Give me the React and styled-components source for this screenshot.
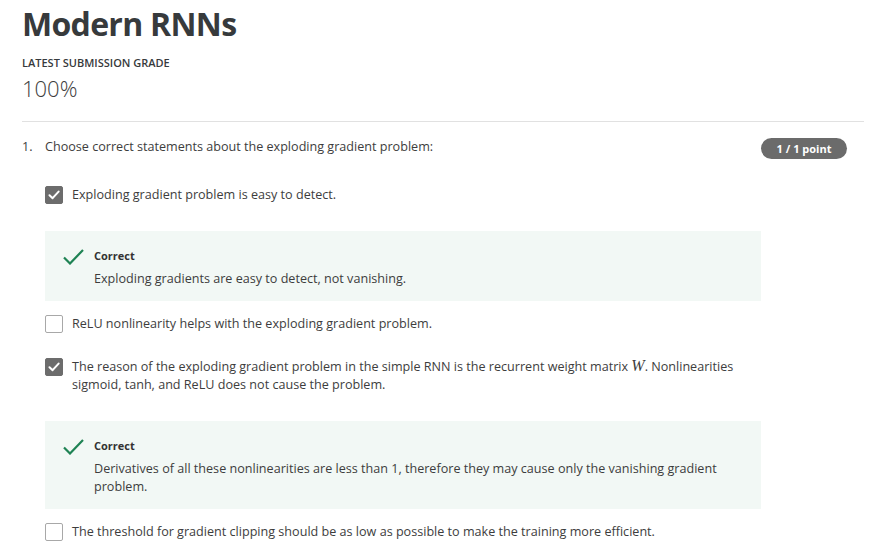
import React from "react";
import styled, { createGlobalStyle } from "styled-components";

const Global = createGlobalStyle`
  html, body { margin: 0; padding: 0; background: #fff; }
  body { font-family: "Open Sans", "Noto Sans", sans-serif; color: #3d3d3d; }
  * { box-sizing: border-box; }
`;

const Page = styled.div`
  padding: 1px 32px 0 22px;
  width: 896px;
`;

const Title = styled.h1`
  margin: 0;
  font-size: 32px;
  line-height: 46px;
  font-weight: 700;
  letter-spacing: -0.7px;
  color: #373a3c;
`;

const GradeLabel = styled.div`
  margin-top: 9px;
  font-size: 11px;
  line-height: 14px;
  font-weight: 600;
  text-transform: uppercase;
  color: #373a3c;
`;

const GradeValue = styled.div`
  margin-top: 4px;
  font-size: 22px;
  line-height: 28px;
  font-weight: 300;
  color: #3d3d3d;
`;

const Divider = styled.hr`
  margin: 19px 0 0;
  border: 0;
  border-top: 1px solid #e1e1e1;
`;

const Question = styled.div`
  display: grid;
  grid-template-columns: 23px 1fr;
  margin-top: 16px;
`;

const Num = styled.div`
  font-size: 12.6px;
  line-height: 18px;
`;

const QBody = styled.div`
  width: 716px;
`;

const QHead = styled.div`
  display: flex;
  justify-content: space-between;
  align-items: flex-start;
  min-height: 22px;
`;

const QText = styled.div`
  font-size: 12.6px;
  line-height: 18px;
`;

const Badge = styled.div`
  flex: none;
  margin-right: -86px;
  width: 86px;
  height: 21px;
  border-radius: 11px;
  background: #6b6b6b;
  color: #fff;
  font-size: 11px;
  font-weight: 700;
  line-height: 21px;
  text-align: center;
`;

const Options = styled.div`
  margin-top: 26px;
`;

const OptionRow = styled.div`
  display: flex;
  align-items: flex-start;
  gap: 9px;
  margin-bottom: ${(p) => (p.$hasFeedback ? "27px" : "25px")};
`;

const Box = styled.span`
  flex: none;
  width: 18px;
  height: 18px;
  border-radius: 2px;
  display: flex;
  align-items: center;
  justify-content: center;
  background: ${(p) => (p.$checked ? "#6c6c6c" : "#fff")};
  border: 1px solid ${(p) => (p.$checked ? "#6c6c6c" : "#a8a8a8")};
`;

const OptText = styled.div`
  font-size: 12.6px;
  line-height: 18px;
`;

const MathW = styled.span`
  font-family: "Liberation Serif", "DejaVu Serif", serif;
  font-style: italic;
  font-size: 16px;
  line-height: 14px;
`;

const Feedback = styled.div`
  display: flex;
  gap: 10px;
  background: #f2f8f5;
  padding: 17px 24px 13px 18px;
  margin-bottom: 14px;
`;

const FbIcon = styled.div`
  flex: none;
  width: 21px;
`;

const FbBody = styled.div``;

const FbTitle = styled.div`
  font-size: 11px;
  line-height: 16px;
  font-weight: 700;
  color: #333;
  margin-bottom: 6px;
`;

const FbText = styled.div`
  font-size: 12.6px;
  line-height: 18px;
`;

const Tick = () => (
  <svg width="12" height="10" viewBox="0 0 12 10">
    <path d="M1.5 5.2 L4.6 8.2 L10.6 1.6" fill="none" stroke="#fff" strokeWidth="2" strokeLinecap="round" strokeLinejoin="round" />
  </svg>
);

const GreenCheck = () => (
  <svg width="21" height="16" viewBox="0 0 21 16">
    <path d="M1 8.5 L7 14.5 L20 1" fill="none" stroke="#1f8354" strokeWidth="2.2" />
  </svg>
);

const options = [
  {
    checked: true,
    text: "Exploding gradient problem is easy to detect.",
    feedback: "Exploding gradients are easy to detect, not vanishing.",
  },
  { checked: false, text: "ReLU nonlinearity helps with the exploding gradient problem." },
  {
    checked: true,
    text: (
      <>
        The reason of the exploding gradient problem in the simple RNN is the recurrent weight matrix <MathW>W</MathW>. Nonlinearities sigmoid, tanh, and ReLU does not cause the problem.
      </>
    ),
    feedback:
      "Derivatives of all these nonlinearities are less than 1, therefore they may cause only the vanishing gradient problem.",
  },
  {
    checked: false,
    text: "The threshold for gradient clipping should be as low as possible to make the training more efficient.",
  },
];

export default function App() {
  return (
    <>
      <Global />
      <Page>
        <Title>Modern RNNs</Title>
        <GradeLabel>Latest Submission Grade</GradeLabel>
        <GradeValue>100%</GradeValue>
        <Divider />
        <Question>
          <Num>1.</Num>
          <QBody>
            <QHead>
              <QText>Choose correct statements about the exploding gradient problem:</QText>
              <Badge>1 / 1 point</Badge>
            </QHead>
            <Options>
              {options.map((o, i) => (
                <div key={i}>
                  <OptionRow $hasFeedback={!!o.feedback}>
                    <Box $checked={o.checked}>{o.checked && <Tick />}</Box>
                    <OptText>{o.text}</OptText>
                  </OptionRow>
                  {o.feedback && (
                    <Feedback>
                      <FbIcon>
                        <GreenCheck />
                      </FbIcon>
                      <FbBody>
                        <FbTitle>Correct</FbTitle>
                        <FbText>{o.feedback}</FbText>
                      </FbBody>
                    </Feedback>
                  )}
                </div>
              ))}
            </Options>
          </QBody>
        </Question>
      </Page>
    </>
  );
}
